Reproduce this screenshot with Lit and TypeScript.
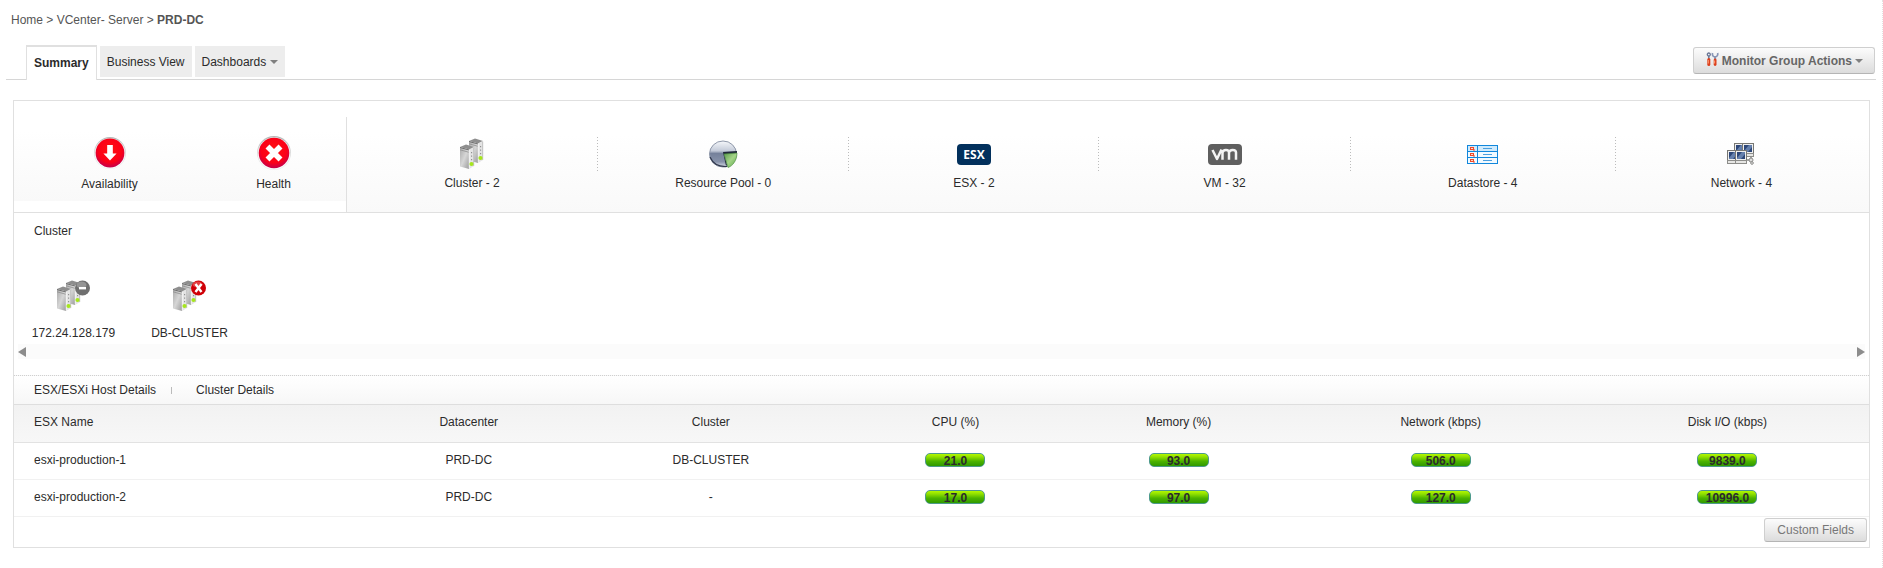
import { LitElement, html, css, svg, nothing } from "lit";
import { customElement, property } from "lit/decorators.js";

type IconName =
  | "down" | "critical" | "cluster" | "pool" | "esx" | "vm" | "datastore" | "network" | "tools";

const server = (x: number, y: number) => svg`
  <g transform="translate(${x} ${y})">
    <path d="M0 3 L6 0.500 L14 3 L9 5.500 Z" fill="#8e8e8e"/>
    <path d="M0 3 L9 5.500 V25 L0 22.500 Z" fill="url(#side)"/>
    <path d="M9 5.500 L14 3 V22 L9 25 Z" fill="#e4e4e4"/>
    <path d="M0 3.500 L9 6" stroke="#6e6e6e" stroke-width="1" fill="none"/>
    <path d="M0 5.800 L9 8.300" stroke="#8f8f8f" stroke-width=".8" fill="none"/>
    <path d="M9.300 6 V24.500" stroke="#f4f4f4" stroke-width="1"/>
    <path d="M13.700 3.500 V22" stroke="#b5b5b5" stroke-width=".8"/>
    <path d="M11.600 8 v1.300 M11.600 11.500 v1.300 M11.600 15 v1.200" stroke="#8e8e8e" stroke-width="1.100"/>
    <circle cx="11.500" cy="20" r="2.100" fill="#a6e61e"/>
  </g>`;

const sideGradient = svg`
  <linearGradient id="side" x1="0" y1="0" x2="1" y2="1">
    <stop offset="0" stop-color="#a9a9a9"/><stop offset=".5" stop-color="#d6d6d6"/>
    <stop offset="1" stop-color="#9c9c9c"/>
  </linearGradient>`;

const redBall = svg`
  <defs>
    <radialGradient id="red" cx=".5" cy=".4" r=".6">
      <stop offset="0" stop-color="#ff1010"/><stop offset=".7" stop-color="#fb0018"/>
      <stop offset="1" stop-color="#c4004c"/>
    </radialGradient>
    <linearGradient id="rim" x1="0" y1="0" x2="0" y2="1">
      <stop offset="0" stop-color="#b5b5b5"/><stop offset=".5" stop-color="#dcdcdc"/>
      <stop offset="1" stop-color="#ececec"/>
    </linearGradient>
  </defs>
  <circle cx="17" cy="17" r="17" fill="url(#rim)"/>
  <circle cx="17" cy="17.400" r="16.200" fill="#fff" opacity=".75"/>
  <circle cx="17" cy="17" r="15.300" fill="url(#red)"/>`;

const workstation = (x: number, y: number) => svg`
  <g transform="translate(${x} ${y})">
    <rect x=".5" y=".5" width="11" height="10" fill="#efefef" stroke="#777773"/>
    <rect x="2" y="2" width="8" height="7" fill="#2d4778"/>
    <path d="M2 8 L7 2 H10 V4 L6 9 H2 Z" fill="#6580ad"/>
    <rect x=".5" y="10.5" width="11" height="3" fill="#e6e6e4" stroke="#8d8d8a"/>
  </g>`;

@customElement("app-icon")
class AppIcon extends LitElement {
  @property() name: IconName = "cluster";
  @property() badge = "";

  static styles = css`
    :host { display: block; line-height: 0; }
    svg { display: block; overflow: visible; }
    .esx-text { font: bold 12px "Open Sans", "Noto Sans", sans-serif; fill: #fff; }
  `;

  render() {
    switch (this.name) {
      case "down":
        return html`<svg width="32" height="32" viewBox="0 0 34 34">${redBall}
          <path d="M14 8.500 h6 v9 h4 L17 25 L10 17.500 h4 Z" fill="#fff"/></svg>`;
      case "critical":
        return html`<svg width="34" height="34" viewBox="0 0 34 34">${redBall}
          <path d="M10.500 10.500 L23.500 23.500 M23.500 10.500 L10.500 23.500" stroke="#fff" stroke-width="5.600"/></svg>`;
      case "cluster":
        return html`<svg width=${this.badge ? 34 : 24} height="32" viewBox=${this.badge ? "0 0 34 32" : "0 0 24 32"}>
          <defs>${sideGradient}</defs>
          ${server(9, 0)}${server(0, 6)}
          ${this.badge === "paused" ? svg`
            <circle cx="25.500" cy="8" r="7.500" fill="#6f6f6f"/>
            <ellipse cx="24.500" cy="5" rx="5" ry="3.500" fill="#a5a5a5" opacity=".7"/>
            <rect x="22" y="7" width="7" height="2.400" fill="#fff"/>` : nothing}
          ${this.badge === "error" ? svg`
            <circle cx="25.500" cy="8" r="7.500" fill="#cf0007"/>
            <ellipse cx="24.500" cy="4.500" rx="5" ry="3" fill="#f26a6a" opacity=".6"/>
            <path d="M22.500 4 L28.500 12 M28.500 4 L22.500 12" stroke="#fff" stroke-width="2.400"/>` : nothing}
        </svg>`;
      case "pool":
        return html`<svg width="30" height="28" viewBox="0 0 30 28">
          <defs>
            <linearGradient id="pie" x1="0" y1="0" x2="0" y2="1">
              <stop offset="0" stop-color="#f6f8fb"/><stop offset=".38" stop-color="#c3cad8"/>
              <stop offset=".48" stop-color="#75819b"/><stop offset=".8" stop-color="#8792aa"/>
              <stop offset="1" stop-color="#dbe0ea"/>
            </linearGradient>
            <linearGradient id="slice" x1="0" y1="0" x2="1" y2="1">
              <stop offset="0" stop-color="#5b9a4c"/><stop offset=".5" stop-color="#a4d488"/>
              <stop offset="1" stop-color="#5aa845"/>
            </linearGradient>
          </defs>
          <ellipse cx="15" cy="14" rx="13.500" ry="13" fill="url(#pie)" stroke="#8f98aa"/>
          <path d="M2 17 C5 24 10 27 19 26.500" fill="none" stroke="#30384c" stroke-width="1.200"/>
          <path d="M15 12 L29 11 V14 L16 14.500 L19 25 L18 26 Z" fill="#20283a"/>
          <path d="M16 14 L29 13 C29 20 25 26 20 27.500 Z" fill="url(#slice)" stroke="#478a3c" stroke-width=".6"/>
        </svg>`;
      case "esx":
        return html`<svg width="34" height="21" viewBox="0 0 34 21">
          <rect width="34" height="21" rx="4" fill="#02305c"/>
          <text class="esx-text" x="17" y="15" text-anchor="middle">ESX</text></svg>`;
      case "vm":
        return html`<svg width="34" height="21" viewBox="0 0 34 21">
          <rect width="34" height="21" rx="4" fill="#5f5f5f"/>
          <path d="M4.500 6 L9 15 L13.500 5.500 M14.500 15.800 V8.500 C15 5 21 5 21 8.500 V15.800 M21 8.500 C21.500 5 28 5 28 8.500 V15.800"
            fill="none" stroke="#f4f4f4" stroke-width="2.500" stroke-linejoin="round"/></svg>`;
      case "datastore":
        return html`<svg width="31" height="19" viewBox="0 0 31 19">
          ${[0, 6, 12].map((y, i) => svg`
            <rect x=".5" y="${y + 0.5}" width="30" height="6" fill="${i ? "#f2faff" : "#cfeafc"}" stroke="#1187dc"/>
            <path d="M10.500 ${y} v7" stroke="#1187dc"/>
            <path d="M16 ${y + 3.5} h9" stroke="#4b9fde"/>
            <rect x="3.500" y="${y + 2.5}" width="3" height="2" fill="#ffd9c8" stroke="#f04a2a"/>
            <path d="M6 ${y + 5} h2" stroke="#f04a2a"/>`)}
        </svg>`;
      case "network":
        return html`<svg width="28" height="22" viewBox="0 0 28 22">
          <path d="M20 17 h3 M24 14 v3" stroke="#8a8a88" stroke-width="1.500"/>
          ${workstation(7, 0)}${workstation(15, 0)}${workstation(0, 7)}${workstation(8, 7)}
          <circle cx="24" cy="17" r="2" fill="#ddd" stroke="#8a8a88"/>
          <circle cx="25" cy="20" r="1.300" fill="#eee" stroke="#8a8a88"/></svg>`;
      case "tools":
        return html`<svg width="13" height="18" viewBox="0 0 13 18">
          <circle cx="2.800" cy="2.500" r="1.500" fill="none" stroke="#6a7796" stroke-width="1.300"/>
          <path d="M2.800 4 V8" stroke="#6a7796" stroke-width="1.500"/>
          <path d="M2.800 7.500 V12.500" stroke="#dc3f1c" stroke-width="3" stroke-linecap="round"/>
          <path d="M2.300 8 V11.500" stroke="#ff9c72" stroke-width="1"/>
          <path d="M6.500 1 C6 3.800 7.500 4.800 9 4.800 C10.500 4.800 12.200 3.800 11.700 1" fill="none" stroke="#8795b5" stroke-width="1.700"/>
          <path d="M9.100 4.500 V8.500" stroke="#8795b5" stroke-width="2"/>
          <path d="M9.100 8 V12.500" stroke="#dc3f1c" stroke-width="2.800" stroke-linecap="round"/>
          <path d="M8.600 8.500 V11.500" stroke="#ff9c72" stroke-width="1"/>
        </svg>`;
    }
  }
}

interface Summary { icon: IconName; label: string; }
interface Host { name: string; datacenter: string; cluster: string; metrics: string[]; }

const STATUS: Summary[] = [
  { icon: "down", label: "Availability" },
  { icon: "critical", label: "Health" },
];

const RESOURCES: Summary[] = [
  { icon: "cluster", label: "Cluster - 2" },
  { icon: "pool", label: "Resource Pool - 0" },
  { icon: "esx", label: "ESX - 2" },
  { icon: "vm", label: "VM - 32" },
  { icon: "datastore", label: "Datastore - 4" },
  { icon: "network", label: "Network - 4" },
];

const CLUSTERS = [
  { name: "172.24.128.179", badge: "paused" },
  { name: "DB-CLUSTER", badge: "error" },
];

const COLUMNS = [
  { title: "ESX Name", share: 351 },
  { title: "Datacenter", share: 207 },
  { title: "Cluster", share: 277 },
  { title: "CPU (%)", share: 212 },
  { title: "Memory (%)", share: 234 },
  { title: "Network (kbps)", share: 290 },
  { title: "Disk I/O (kbps)", share: 283 },
];
const TOTAL_SHARE = COLUMNS.reduce((sum, c) => sum + c.share, 0);

const HOSTS: Host[] = [
  { name: "esxi-production-1", datacenter: "PRD-DC", cluster: "DB-CLUSTER", metrics: ["21.0", "93.0", "506.0", "9839.0"] },
  { name: "esxi-production-2", datacenter: "PRD-DC", cluster: "-", metrics: ["17.0", "97.0", "127.0", "10996.0"] },
];

@customElement("app-root")
class AppRoot extends LitElement {
  static styles = css`
    :host {
      display: block;
      box-sizing: border-box;
      min-height: 100vh;
      border-right: 1px dotted #e2e2e2;
      background: #fff;
      color: #2b2b2b;
      font: 12px/16px "Liberation Sans", Arial, sans-serif;
    }
    * { box-sizing: border-box; }
    a { color: inherit; text-decoration: none; }
    button { font: inherit; color: inherit; margin: 0; cursor: pointer; }

    .crumbs { padding: 12px 11px 0; color: #555; }

    .bar {
      display: flex;
      align-items: flex-end;
      justify-content: space-between;
      margin: 17px 6px 0 6px;
      border-bottom: 1px solid #d6d6d6;
    }
    .tabs { display: flex; align-items: flex-start; gap: 3px; padding-left: 20px; margin-bottom: -1px; }
    .tab {
      border: 0;
      padding: 0 7px;
      height: 31px;
      margin-top: 1px;
      background: #ededed;
      display: flex;
      align-items: center;
      gap: 4px;
      white-space: nowrap;
    }
    .tab.active {
      height: 35px;
      margin-top: 0;
      padding: 0 7px 2px;
      background: #fff;
      border: 1px solid #e0e0e0;
      border-top-width: 2px;
      border-bottom: 0;
      font-weight: bold;
    }
    .caret { border: 4px solid transparent; border-top-color: #808080; border-bottom: 0; }
    .button {
      display: flex;
      align-items: center;
      border: 1px solid #cfcfcf;
      border-bottom-color: #b5b5b5;
      border-radius: 3px;
      background: linear-gradient(#fcfcfc, #dcdcdc);
    }
    .actions {
      height: 27px;
      padding: 0 11px 0 12px;
      gap: 3px;
      margin: 0 1px 5px 0;
      font-weight: bold;
      color: #666;
    }

    .panel { margin: 20px 12px 0 13px; border: 1px solid #e0e0e0; }
    .summary { display: flex; border-bottom: 1px solid #e0e0e0; height: 112px; }
    .status {
      flex: 0 0 332px;
      display: grid;
      grid-template-columns: 191fr 137fr;
      margin-bottom: 11px;
      padding: 35px 4px 0 0;
      background: linear-gradient(#fff 30%, #f9f9f9);
    }
    .rule { width: 1px; margin-top: 16px; background: #e0e0e0; }
    .resources {
      flex: 1;
      display: grid;
      grid-template-columns: 251fr 251fr 250fr 251fr 265fr 251fr;
      padding: 36px 2px 0 0;
      background: linear-gradient(#fff 30%, #f9f9f9);
    }
    .item { display: flex; flex-direction: column; align-items: center; }
    .figure { height: 34px; display: flex; align-items: center; }
    .item .label { margin-top: 6px; }
    .resources .item .label { margin-top: 4px; }
    .cell { display: flex; }
    .cell .item { flex: 1; }
    .dots {
      width: 1px;
      height: 34px;
      background: repeating-linear-gradient(#bcbcbc 0 1px, transparent 1px 3px);
    }

    .clusters { padding: 10px 0 16px; }
    h2 { font: inherit; margin: 0 0 41px 20px; }
    .nodes { display: flex; gap: 21px; margin: 0 12px 3px; }
    .node { width: 95px; display: flex; flex-direction: column; align-items: center; gap: 13px; }
    .scroller { display: flex; justify-content: space-between; align-items: center; height: 15px; margin: 0 4px; background: #fbfbfb; }
    .arrow { padding: 0; background: none; border: 5px solid transparent; width: 0; height: 0; }
    .arrow.left { border-right: 8px solid #8c8c8c; border-left: 0; }
    .arrow.right { border-left: 8px solid #8c8c8c; border-right: 0; }

    .details {
      display: flex;
      align-items: center;
      height: 30px;
      padding-left: 20px;
      border-top: 1px dotted #d0d0d0;
      border-bottom: 1px solid #dedede;
      background: linear-gradient(#fff, #f7f7f7);
    }
    .pipe { width: 1px; height: 7px; margin: 0 24px 0 15px; background: #bbb; }

    table { width: 100%; table-layout: fixed; border-collapse: separate; border-spacing: 0; }
    th, td { padding: 0 0 3px; height: 37px; text-align: center; font-weight: normal; border-bottom: 1px solid #f1f1f1; }
    th { height: 38px; background: linear-gradient(#f2f2f2, #f7f7f7); border-color: #e2e2e2; }
    .name { text-align: left; padding-left: 20px; }
    .metric {
      display: block;
      width: 60px;
      height: 14px;
      margin: 0 auto;
      line-height: 14px;
      border: 1px solid #4d9a8c;
      border-radius: 5px;
      background: linear-gradient(#b4f800, #8fe000 25%, #4db300 60%, #2f9a00);
      font-weight: bold;
    }
    .foot { display: flex; justify-content: flex-end; padding: 1px 2px 5px; }
    .custom { height: 24px; padding: 0 12px; color: #777; }
  `;

  private item(entry: Summary) {
    return html`<a class="item" href="#">
      <span class="figure"><app-icon name=${entry.icon}></app-icon></span>
      <span class="label">${entry.label}</span>
    </a>`;
  }

  render() {
    return html`
      <nav class="crumbs">
        <a href="#">Home</a> &gt; <a href="#">VCenter- Server</a> &gt; <strong>PRD-DC</strong>
      </nav>
      <div class="bar">
        <div class="tabs">
          <button class="tab active">Summary</button>
          <button class="tab">Business View</button>
          <button class="tab">Dashboards<span class="caret"></span></button>
        </div>
        <button class="button actions">
          <app-icon name="tools"></app-icon>Monitor Group Actions<span class="caret"></span>
        </button>
      </div>
      <main class="panel">
        <section class="summary">
          <div class="status">${STATUS.map((s) => this.item(s))}</div>
          <div class="rule"></div>
          <div class="resources">
            ${RESOURCES.map((r, i) => html`<div class="cell">
              ${this.item(r)}${i < RESOURCES.length - 1 ? html`<span class="dots"></span>` : nothing}
            </div>`)}
          </div>
        </section>
        <section class="clusters">
          <h2>Cluster</h2>
          <div class="nodes">
            ${CLUSTERS.map((c) => html`<a class="node" href="#">
              <app-icon name="cluster" badge=${c.badge}></app-icon><span>${c.name}</span>
            </a>`)}
          </div>
          <div class="scroller">
            <button class="arrow left" aria-label="Scroll left"></button>
            <button class="arrow right" aria-label="Scroll right"></button>
          </div>
        </section>
        <nav class="details">
          <a href="#">ESX/ESXi Host Details</a><span class="pipe"></span><a href="#">Cluster Details</a>
        </nav>
        <table>
          <colgroup>
            ${COLUMNS.map((c) => html`<col style="width:${(c.share / TOTAL_SHARE) * 100}%">`)}
          </colgroup>
          <thead>
            <tr>${COLUMNS.map((c, i) => html`<th scope="col" class=${i ? "" : "name"}>${c.title}</th>`)}</tr>
          </thead>
          <tbody>
            ${HOSTS.map((h) => html`<tr>
              <td class="name"><a href="#">${h.name}</a></td>
              <td>${h.datacenter}</td>
              <td>${h.cluster}</td>
              ${h.metrics.map((m) => html`<td><span class="metric">${m}</span></td>`)}
            </tr>`)}
          </tbody>
        </table>
        <div class="foot"><button class="button custom">Custom Fields</button></div>
      </main>
    `;
  }
}
